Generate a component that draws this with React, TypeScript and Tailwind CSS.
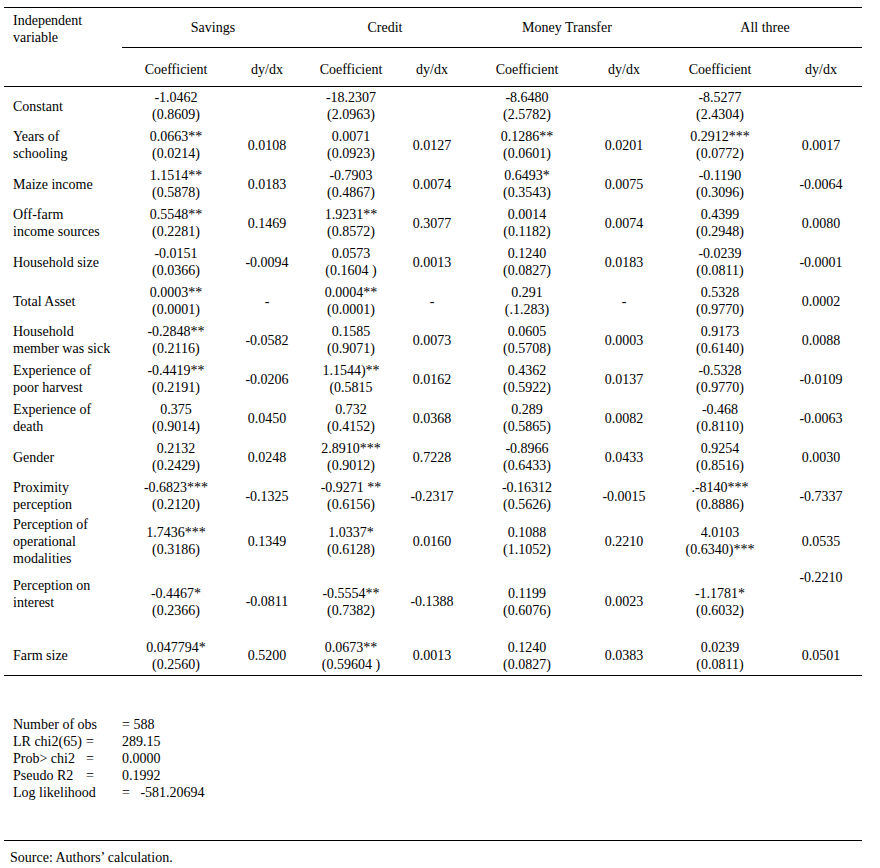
type Coef = [string, string]
type Row = {
  label: string[]
  cells: (Coef | string)[]
  height: string
  labelClass?: string
  lastDyTop?: boolean
}

const rows: Row[] = [
  {
    label: ['Constant'],
    cells: [['-1.0462', '(0.8609)'], '', ['-18.2307', '(2.0963)'], '', ['-8.6480', '(2.5782)'], '', ['-8.5277', '(2.4304)'], ''],
    height: 'h-[39px]',
  },
  {
    label: ['Years of', 'schooling'],
    cells: [['0.0663**', '(0.0214)'], '0.0108', ['0.0071', '(0.0923)'], '0.0127', ['0.1286**', '(0.0601)'], '0.0201', ['0.2912***', '(0.0772)'], '0.0017'],
    height: 'h-[39px]',
  },
  {
    label: ['Maize income'],
    cells: [['1.1514**', '(0.5878)'], '0.0183', ['-0.7903', '(0.4867)'], '0.0074', ['0.6493*', '(0.3543)'], '0.0075', ['-0.1190', '(0.3096)'], '-0.0064'],
    height: 'h-[39px]',
  },
  {
    label: ['Off-farm', 'income sources'],
    cells: [['0.5548**', '(0.2281)'], '0.1469', ['1.9231**', '(0.8572)'], '0.3077', ['0.0014', '(0.1182)'], '0.0074', ['0.4399', '(0.2948)'], '0.0080'],
    height: 'h-[39px]',
  },
  {
    label: ['Household size'],
    cells: [['-0.0151', '(0.0366)'], '-0.0094', ['0.0573', '(0.1604 )'], '0.0013', ['0.1240', '(0.0827)'], '0.0183', ['-0.0239', '(0.0811)'], '-0.0001'],
    height: 'h-[39px]',
  },
  {
    label: ['Total Asset'],
    cells: [['0.0003**', '(0.0001)'], '-', ['0.0004**', '(0.0001)'], '-', ['0.291', '(.1.283)'], '-', ['0.5328', '(0.9770)'], '0.0002'],
    height: 'h-[39px]',
  },
  {
    label: ['Household', 'member was sick'],
    cells: [['-0.2848**', '(0.2116)'], '-0.0582', ['0.1585', '(0.9071)'], '0.0073', ['0.0605', '(0.5708)'], '0.0003', ['0.9173', '(0.6140)'], '0.0088'],
    height: 'h-[39px]',
  },
  {
    label: ['Experience of', 'poor harvest'],
    cells: [['-0.4419**', '(0.2191)'], '-0.0206', ['1.1544)**', '(0.5815'], '0.0162', ['0.4362', '(0.5922)'], '0.0137', ['-0.5328', '(0.9770)'], '-0.0109'],
    height: 'h-[39px]',
  },
  {
    label: ['Experience of', 'death'],
    cells: [['0.375', '(0.9014)'], '0.0450', ['0.732', '(0.4152)'], '0.0368', ['0.289', '(0.5865)'], '0.0082', ['-0.468', '(0.8110)'], '-0.0063'],
    height: 'h-[39px]',
  },
  {
    label: ['Gender'],
    cells: [['0.2132', '(0.2429)'], '0.0248', ['2.8910***', '(0.9012)'], '0.7228', ['-0.8966', '(0.6433)'], '0.0433', ['0.9254', '(0.8516)'], '0.0030'],
    height: 'h-[39px]',
  },
  {
    label: ['Proximity', 'perception'],
    cells: [['-0.6823***', '(0.2120)'], '-0.1325', ['-0.9271 **', '(0.6156)'], '-0.2317', ['-0.16312', '(0.5626)'], '-0.0015', ['.-8140***', '(0.8886)'], '-0.7337'],
    height: 'h-[39px]',
  },
  {
    label: ['Perception of', 'operational', 'modalities'],
    cells: [['1.7436***', '(0.3186)'], '0.1349', ['1.0337*', '(0.6128)'], '0.0160', ['0.1088', '(1.1052)'], '0.2210', ['4.0103', '(0.6340)***'], '0.0535'],
    height: 'h-[50px]',
  },
  {
    label: ['Perception on', 'interest'],
    cells: [['-0.4467*', '(0.2366)'], '-0.0811', ['-0.5554**', '(0.7382)'], '-0.1388', ['0.1199', '(0.6076)'], '0.0023', ['-1.1781*', '(0.6032)'], '-0.2210'],
    height: 'h-[70px]',
    labelClass: 'pb-[16px]',
    lastDyTop: true,
  },
  {
    label: ['Farm size'],
    cells: [['0.047794*', '(0.2560)'], '0.5200', ['0.0673**', '(0.59604 )'], '0.0013', ['0.1240', '(0.0827)'], '0.0383', ['0.0239', '(0.0811)'], '0.0501'],
    height: 'h-[39px]',
  },
]

const groups = ['Savings', 'Credit', 'Money Transfer', 'All three']

const stats = [
  { label: 'Number of obs', eq: '', value: '= 588' },
  { label: 'LR chi2(65)', eq: '=', value: '289.15' },
  { label: 'Prob> chi2', eq: '=', value: '0.0000' },
  { label: 'Pseudo R2', eq: '=', value: '0.1992' },
  { label: 'Log likelihood', eq: '', value: '=   -581.20694' },
]

export default function App() {
  return (
    <div className="min-h-screen bg-white text-black font-['Liberation_Serif','Times_New_Roman',serif] text-[14px] leading-[17px]">
      <div className="w-[858px] ml-[4px] pt-[7px]">
        <table className="w-[858px] table-fixed border-collapse">
          <colgroup>
            <col className="w-[118px]" />
            <col className="w-[108px]" />
            <col className="w-[74px]" />
            <col className="w-[94px]" />
            <col className="w-[68px]" />
            <col className="w-[122px]" />
            <col className="w-[72px]" />
            <col className="w-[120px]" />
            <col className="w-[82px]" />
          </colgroup>
          <thead>
            <tr className="h-[40px] border-t border-black">
              <td rowSpan={2} className="align-top pl-[9px] pt-[4px] border-b border-black whitespace-nowrap">
                Independent
                <br />
                variable
              </td>
              {groups.map((g, i) => (
                <td
                  key={g}
                  colSpan={2}
                  className={`text-center align-middle border-b border-black ${i >= 2 ? 'pl-[8px]' : ''}`}
                >
                  {g}
                </td>
              ))}
            </tr>
            <tr className="h-[39px]">
              {groups.map((g) => (
                <>
                  <td key={g + 'c'} className="text-center align-middle pt-[4px] border-b border-black">
                    Coefficient
                  </td>
                  <td key={g + 'd'} className="text-center align-middle pt-[4px] border-b border-black">
                    dy/dx
                  </td>
                </>
              ))}
            </tr>
          </thead>
          <tbody>
            {rows.map((row, ri) => (
              <tr
                key={ri}
                className={`${row.height} ${ri === rows.length - 1 ? 'border-b border-black' : ''}`}
              >
                <td className={`pl-[9px] align-middle whitespace-nowrap ${row.labelClass ?? ''}`}>
                  {row.label.map((l, li) => (
                    <div key={li}>{l}</div>
                  ))}
                </td>
                {row.cells.map((c, ci) =>
                  Array.isArray(c) ? (
                    <td key={ci} className="text-center align-middle whitespace-pre">
                      <div>{c[0]}</div>
                      <div>{c[1]}</div>
                    </td>
                  ) : (
                    <td
                      key={ci}
                      className={`text-center whitespace-pre ${
                        row.lastDyTop && ci === 7 ? 'align-top pt-[2px]' : 'align-middle'
                      }`}
                    >
                      {c}
                    </td>
                  )
                )}
              </tr>
            ))}
          </tbody>
        </table>

        <div className="pl-[9px] mt-[40px]">
          {stats.map((s) => (
            <div key={s.label} className="flex whitespace-pre">
              <span className="w-[73px] shrink-0 whitespace-nowrap">{s.label}</span>
              <span className="w-[36px] shrink-0">{s.eq}</span>
              <span>{s.value}</span>
            </div>
          ))}
        </div>

        <div className="mt-[39px] border-t border-black pt-[8px] pl-[6px]">Source: Authors’ calculation.</div>
      </div>
    </div>
  )
}
